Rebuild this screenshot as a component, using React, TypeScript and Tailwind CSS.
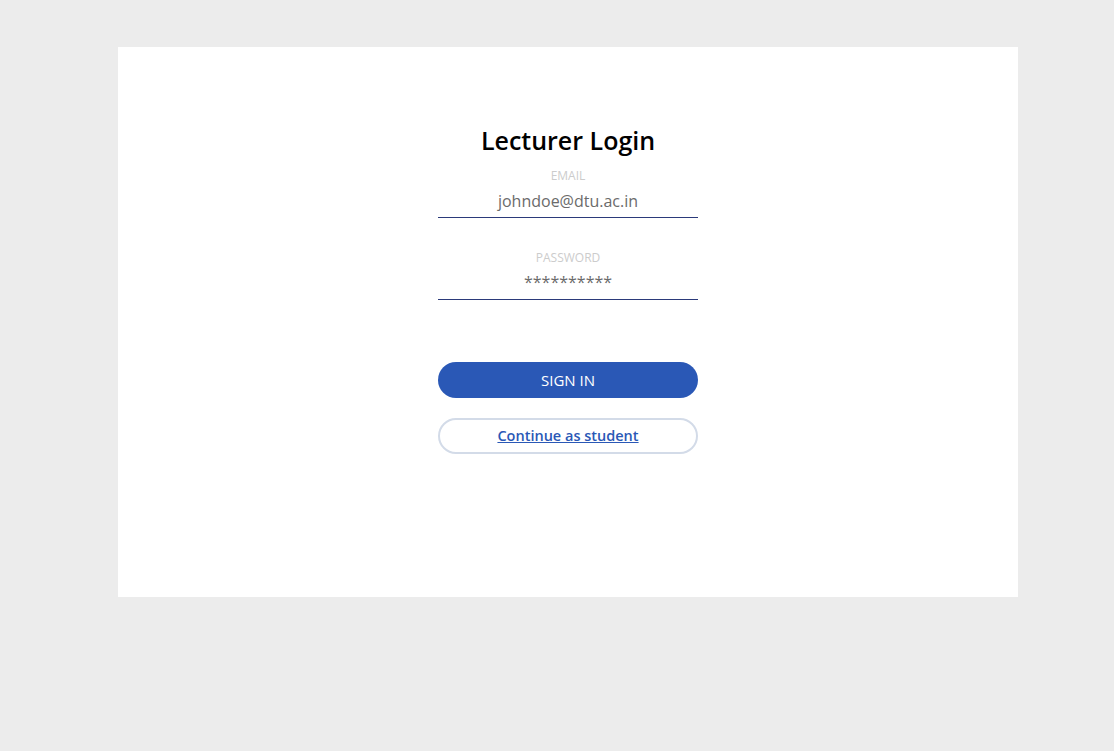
import React from "react";

export default function App() {
  return (
    <div
      className="min-h-[751px] w-full bg-[#ececec] pt-[47px]"
      style={{ fontFamily: '"Open Sans", "Noto Sans", sans-serif' }}
    >
      <div className="ml-[118px] flex h-[550px] w-[900px] flex-col items-center bg-white pt-[76px]">
        <h1 className="text-[25px] font-semibold leading-[35px] text-black">Lecturer Login</h1>
        <div className="mt-[10px] flex w-[260px] flex-col items-center">
          <label className="text-[12px] leading-[16px] text-[#cccccc]">EMAIL</label>
          <div className="mt-[5px] w-full border-b border-[#2b3a7a] pb-[4px] text-center text-[16px] leading-[24px] text-[#6b6b6b]">
            johndoe@dtu.ac.in
          </div>
        </div>
        <div className="mt-[32px] flex w-[260px] flex-col items-center">
          <label className="text-[12px] leading-[16px] text-[#cccccc]">PASSWORD</label>
          <div className="mt-[4px] w-full border-b border-[#2b3a7a] pb-[5px] text-center text-[16px] leading-[24px] text-[#6b6b6b]">
            **********
          </div>
        </div>
        <button className="mt-[62px] h-[36px] w-[260px] rounded-full bg-[#2a58b6] text-[15px] text-white">
          SIGN IN
        </button>
        <button className="mt-[20px] h-[36px] w-[260px] rounded-full border-2 border-[#d3dbe8] bg-white text-[14.5px] font-semibold text-[#2a58b6] underline">
          Continue as student
        </button>
      </div>
    </div>
  );
}
